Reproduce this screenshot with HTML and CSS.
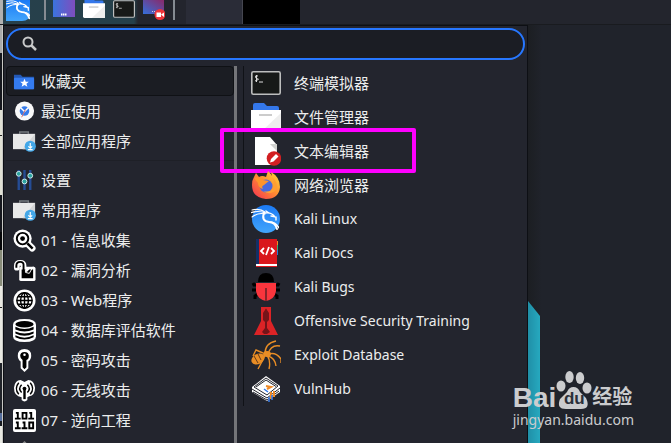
FILE: index.html
```html
<!DOCTYPE html>
<html lang="zh-CN">
<head>
<meta charset="utf-8">
<title>应用程序菜单</title>
<link rel="stylesheet" href="styles.css">
</head>
<body>
<svg class="defs" aria-hidden="true">
  <defs>
    <linearGradient id="g-kali" x1="0" y1="0" x2="0" y2="1"><stop offset="0" stop-color="#1b7af5"/><stop offset="1" stop-color="#42a5fb"/></linearGradient>
    <linearGradient id="g-screen" x1="0" y1="0" x2="1" y2="0"><stop offset="0" stop-color="#3b74dd"/><stop offset="1" stop-color="#7f4dbe"/></linearGradient>
    <linearGradient id="g-rec" x1="0" y1="1" x2="1" y2="0"><stop offset="0" stop-color="#3470dc"/><stop offset="1" stop-color="#8a2868"/></linearGradient>
    <linearGradient id="g-fox" x1="1" y1="0" x2="0" y2="1"><stop offset="0" stop-color="#ffdc3e"/><stop offset=".45" stop-color="#ff9130"/><stop offset="1" stop-color="#f52c55"/></linearGradient>
    <symbol id="dragon" viewBox="0 0 28 28"><g fill="none" stroke="#fff" stroke-linecap="round"><path d="M-1 9Q7 6 14 9M1 6Q9 4 14 8M1 13Q8 8 14 10" stroke-width="1.1"/><path d="M13 9Q10 17 18 18Q24 18 26 25" stroke-width="2"/><path d="M14 9Q21 8 24 13M15 7L18 9M20 12L25 13L25 16M18 18Q25 18 28 24" stroke-width="1.4"/></g></symbol>
    <symbol id="files" viewBox="0 0 30 28"><path d="M2 2Q2 0 4 0H13L16 3H26Q28 3 28 5V9H2Z" fill="#3477ea"/><path d="M0 7H30V25Q30 27 28 27H2Q0 27 0 25Z" fill="#fff"/><path d="M30 10V27H12Z" fill="#eee"/><path d="M8 12H21" stroke="#bbb" stroke-width="1.5"/></symbol>
    <symbol id="term" viewBox="0 0 30 24"><rect x=".8" y=".8" width="28.4" height="22.4" rx="1.5" fill="#171918" stroke="#bdbebe" stroke-width="1.6"/><path d="M7 5Q4 4 4.500 6T7 8T4 10M5.500 4V11M8 11H12" fill="none" stroke="#ddd"/></symbol>
    <symbol id="bag" viewBox="0 0 24 22"><path d="M7 3V1H16V3" fill="none" stroke="#777b80" stroke-width="1.500"/><rect x="0" y="3" width="23" height="16" fill="#e9e9e9"/><path d="M23 3V19H10Z" fill="#d3d4d5"/><circle cx="18" cy="16" r="5.800" fill="#43a7e8"/><path d="M18 12.500V18M16 16L18 18L20 16M15.500 19.500H20.500" fill="none" stroke="#fff" stroke-width="1.200"/></symbol>
  </defs>
</svg>
<div class="desktop">
  <header class="panel">
    <button class="panel-btn start" aria-label="开始菜单"><svg viewBox="0 0 24 24"><path d="M0 0H24V13Q24 21 16 21H0Z" fill="url(#g-kali)"/><use href="#dragon" width="25" height="25" y="-4"/></svg></button>
    <span class="sep"></span>
    <button class="panel-btn" aria-label="显示桌面"><svg viewBox="0 0 22 24"><rect width="22" height="17" fill="url(#g-screen)"/><path d="M8 14.500H14" stroke="#fff" stroke-width="2" stroke-dasharray="1.500 .5"/></svg></button>
    <button class="panel-btn" aria-label="文件"><svg viewBox="0 0 22 24"><use href="#files" width="22" height="21" y="-2"/></svg></button>
    <button class="panel-btn" aria-label="终端"><svg viewBox="0 0 22 24"><use href="#term" width="22" height="18"/></svg></button>
    <button class="panel-btn" aria-label="录屏"><svg viewBox="0 0 22 24"><rect width="21" height="14" y="0" fill="url(#g-rec)"/><path d="M9 11.500H13" stroke="#ccd" stroke-dasharray="1 1"/><circle cx="17" cy="14.500" r="5.500" fill="#ed3439"/><path d="M13.500 12.500H18V17H13.500ZM18 14.500L21 12.500V17Z" fill="#fff"/></svg></button>
    <span class="sep"></span>
    <span class="task"></span>
    <span class="task active"></span>
  </header>
  <div class="stage">
    <div class="edge"></div>
    <main class="menu">
      <label class="search">
        <svg viewBox="0 0 16 16"><circle cx="6" cy="6" r="4.500" fill="none" stroke="#c8c9ca" stroke-width="2"/><path d="M9.500 9.500L14 14" stroke="#c8c9ca" stroke-width="2.500"/></svg>
        <input type="text" aria-label="搜索">
      </label>
      <div class="columns">
        <nav class="categories">
          <a href="#" class="cat selected"><svg viewBox="0 0 24 24"><path d="M1 5H8L10 7H22V20H1Z" fill="#2358b5"/><rect x="1" y="8" width="21" height="12" rx="1" fill="#347bef"/><path d="M12 9L13.300 12.300H16.500L14 14.300L15 17.500L12 15.600L9 17.500L10 14.300L7.500 12.300H10.700Z" fill="#fff"/></svg>收藏夹</a>
          <a href="#" class="cat"><svg viewBox="0 0 24 24"><circle cx="12" cy="11.500" r="10" fill="#f9f9fa"/><circle cx="12" cy="11.500" r="5" fill="#367bea"/><path d="M8 8L12 12L16 8" fill="none" stroke="#fff" stroke-width="1.500"/><path d="M13 10L9 18" stroke="#df716d"/></svg>最近使用</a>
          <a href="#" class="cat"><svg viewBox="0 0 24 24"><use href="#bag" width="24" height="22" y="1"/></svg>全部应用程序</a>
          <hr class="rule">
          <a href="#" class="cat"><svg viewBox="0 0 24 24"><path d="M6 1V22M12 1V22M18 1V22" stroke="#254c94" stroke-width="2.500"/><g fill="#2ba39f" stroke="#d4eeee"><circle cx="6" cy="5" r="2.500"/><circle cx="12" cy="13" r="2.500"/><circle cx="18" cy="7" r="2.500"/></g></svg>设置</a>
          <a href="#" class="cat"><svg viewBox="0 0 24 24"><use href="#bag" width="24" height="22" y="1"/></svg>常用程序</a>
          <a href="#" class="cat"><svg viewBox="0 0 24 24"><path d="M15 15L20 20" stroke="#fff" stroke-width="7" stroke-linecap="round"/><circle cx="10" cy="10" r="9.500" fill="#fff"/><path d="M15 15L20.500 20.500" stroke="#000" stroke-width="2.500"/><circle cx="10" cy="10" r="6" fill="#fff" stroke="#000" stroke-width="2"/><circle cx="10" cy="10" r="2.500" fill="#000"/></svg>01 - 信息收集</a>
          <a href="#" class="cat"><svg viewBox="0 0 24 24"><path d="M4 9V7Q4 4 7.500 4T11 7V12" fill="none" stroke="#fff" stroke-width="6" stroke-linecap="round"/><rect x="6.500" y="8" width="17" height="15" rx="2" fill="#fff"/><path d="M3.500 9V7Q3.500 3 7.500 3T11 7V12" fill="none" stroke="#000" stroke-width="2"/><path d="M9 11H13L14 14L17 11H21V20H9Z" fill="#000"/><path d="M13 11V14L17 15L21 8" fill="none" stroke="#fff"/></svg>02 - 漏洞分析</a>
          <a href="#" class="cat"><svg viewBox="0 0 24 24"><circle cx="12" cy="12" r="11.500" fill="#fff"/><g fill="none" stroke="#000" stroke-width="1.500"><circle cx="12" cy="12" r="8"/><ellipse cx="12" cy="12" rx="4" ry="8"/><path d="M12 4V20M4 12H20M5.500 8H18.500M5.500 16H18.500"/></g></svg>03 - Web程序</a>
          <a href="#" class="cat"><svg viewBox="0 0 24 24"><path d="M0 6Q0 0 12 0T24 6V18Q24 24 12 24T0 18Z" fill="#fff"/><ellipse cx="12" cy="5.500" rx="9.500" ry="3.300"/><path d="M2.500 8Q12 13 21.500 8V11Q12 15 2.500 11ZM2.500 13Q12 17 21.500 13V15Q12 20 2.500 15ZM2.500 17Q12 22 21.500 17V19Q12 24 2.500 19Z"/></svg>04 - 数据库评估软件</a>
          <a href="#" class="cat"><svg viewBox="0 0 24 24"><path d="M5 7Q5 0 12 0T19 7Q19 11 16 13V20L12 24L8 20V13Q5 11 5 7Z" fill="#fff"/><path d="M7.500 7Q7.500 3 12 3T16.500 7T14 11.500V19L12 21L10 19V11.500Q7.500 10 7.500 7Z"/><circle cx="12" cy="6" r="1.300" fill="#fff"/></svg>05 - 密码攻击</a>
          <a href="#" class="cat"><svg viewBox="0 0 24 24"><path d="M1 9Q2 1 8 1L12 3L16 1Q22 1 23 9Q23 17 17 18L15 19V22Q12 25 9 22V19Q1 18 1 9Z" fill="#fff"/><circle cx="12" cy="10" r="2"/><path d="M12 10V21" stroke="#000" stroke-width="2.500"/><path d="M9 6Q5 10 9 14M15 6Q19 10 15 14M6 4Q1 10 6 16M18 4Q23 10 18 16" fill="none" stroke="#000" stroke-width="1.500"/></svg>06 - 无线攻击</a>
          <a href="#" class="cat"><svg viewBox="0 0 24 24"><rect width="24" height="24" rx="2" fill="#fff"/><g fill="none" stroke="#000" stroke-width="2"><path d="M3 4H5V10M2 10H8M10 4H14V10H10ZM17 4H19V10M16 10H22M3 14H5V20M2 20H8M10 14H12V20M9 20H15M17 14H21V20H17Z"/></g></svg>07 - 逆向工程</a>
          <a href="#" class="cat" aria-label="更多"><svg viewBox="0 0 24 24"><path d="M9 5L12 2L15 5Z" fill="#888"/></svg></a>
        </nav>
        <section class="apps">
          <a href="#" class="app"><svg viewBox="0 0 30 30"><use href="#term" width="30" height="24" y="3"/></svg>终端模拟器</a>
          <a href="#" class="app"><svg viewBox="0 0 30 30"><use href="#files" width="30" height="28" y="1"/></svg>文件管理器</a>
          <a href="#" class="app marked"><svg viewBox="0 0 30 30"><path d="M4 1H19L26 9V29H4Z" fill="#fff"/><path d="M19 1V8H26V15L19 8Z" fill="#d1d2d0"/><circle cx="23" cy="22.500" r="7.300" fill="#d21f22"/><path d="M19 26.500L20 23L25 18L27.500 20.500L22.500 25.500Z" fill="#fff"/></svg>文本编辑器</a>
          <a href="#" class="app"><svg viewBox="0 0 30 30"><path d="M3 7L5 3L8 7Q11 5 15 7L17 1Q20 4 21 6L20 2Q29 7 29 17Q28 29 15 29Q1 28 1 15Q1 10 3 7Z" fill="url(#g-fox)"/><circle cx="15" cy="16" r="6.500" fill="#4869df"/><path d="M3 8Q8 6 12 10L18 11L13 15Q10 16 12 19Q7 18 7 13Z" fill="#ff942b"/><path d="M21 7Q24 12 22 18Q19 23 12 21Q20 26 25 20Q28 13 21 7Z" fill="#ff9f32"/></svg>网络浏览器</a>
          <a href="#" class="app western"><svg viewBox="0 0 30 30"><circle cx="15" cy="15" r="14" fill="url(#g-kali)"/><use href="#dragon" width="28" height="28"/></svg>Kali Linux</a>
          <a href="#" class="app western"><svg viewBox="0 0 30 30"><path d="M5 1H26V29H5Z" fill="#d9171c"/><path d="M5 1H8V26H5Z" fill="#142f65"/><path d="M5 26H26V28H5Z" fill="#fff"/><path d="M26 3H27V7H26Z" fill="#ee8d28"/><path d="M26 7H27V12H26Z" fill="#2fb071"/><path d="M26 12H27V17H26Z" fill="#237ddc"/><path d="M13 10L10 13L13 16M20 10L23 13L20 16M18 9L15 17" fill="none" stroke="#fff" stroke-width="1.800"/></svg>Kali Docs</a>
          <a href="#" class="app western"><svg viewBox="0 0 30 30"><path d="M7 10Q7 1 15 1T23 10Z"/><path d="M6 13H3L2 11M24 13H27L28 11M6 18H1M24 18H29M7 22L4 24V27M23 22L26 24V27" fill="none" stroke="#000" stroke-width="3"/><path d="M5 11H25V19Q24 27 15 29Q6 27 5 19Z" fill="#fa353d"/><path d="M15 16V29" stroke="#8a252b" stroke-width="2"/></svg>Kali Bugs</a>
          <a href="#" class="app western"><svg viewBox="0 0 30 30"><path d="M10 1H20V15L27 29H3L10 15Z" fill="#dc2326"/><path d="M14 4Q15 1 16 4L18 7V14L16 16V22L19 26L16 28H13L11 26L14 22V16L12 14V7Z" fill="#751419"/></svg>Offensive Security Training</a>
          <a href="#" class="app western"><svg viewBox="0 0 30 30"><g fill="#e98d25"><ellipse cx="7" cy="19" rx="7" ry="5" transform="rotate(-28 7 19)"/><ellipse cx="16" cy="14" rx="4" ry="3"/></g><path d="M14 14Q14 3 25 1M17 14Q20 4 29 6M18 14Q25 12 30 19V23M17 16Q24 18 25 26M16 15Q20 21 18 29M14 15Q11 22 7 29M12 13L5 10L2 16" fill="none" stroke="#e98d25" stroke-width="1.400"/><path d="M3 16L7 23M7 14L10 20" stroke="#653a18"/></svg>Exploit Database</a>
          <a href="#" class="app western"><svg viewBox="0 0 30 30"><path d="M1 13L15 2L29 12V18L16 27L1 18Z" fill="#fff"/><path d="M3 13L15 4L27 12L16 21ZM5 13L15 6L25 12.500M1 15L16 24L29 14M2 18L16 26L28 17" fill="none" stroke="#23252e" stroke-width="1"/><path d="M15 12L20 13L16 15M20 18V25M23 17V23" fill="none" stroke="#ef8a28" stroke-width="2"/><path d="M13 15L17 18M18 23V28M21 21V26" stroke="#347bea" stroke-width="1.500"/></svg>VulnHub</a>
        </section>
      </div>
    </main>
    <aside class="wallpaper"><div class="beam"></div></aside>
  </div>
  <div class="watermark">
    <div class="brand"><span class="latin">Bai</span><span class="paw"><svg viewBox="0 0 36 38"><g fill="currentColor"><ellipse cx="5" cy="15" rx="4.500" ry="5.500"/><ellipse cx="13.500" cy="6" rx="4.200" ry="6"/><ellipse cx="24" cy="7" rx="4.200" ry="6"/><ellipse cx="31" cy="17" rx="4.500" ry="5.500"/><path d="M17.500 16Q22 16 24 21L30 27Q35 38 25 38H10Q0 38 4 28L11 21Q13 16 17.500 16Z"/></g></svg><span class="du">du</span></span><span class="hans">经验</span></div>
    <div class="site">jingyan.baidu.com</div>
  </div>
</div>
</body>
</html>
```

FILE: styles.css
```css
* { box-sizing: border-box; }

body {
  margin: 0;
  background: #20232b;
  color: #eceded;
  font: 15px/20px "Noto Sans", "Noto Sans CJK SC", sans-serif;
}

a { color: inherit; text-decoration: none; }
svg { display: block; flex: none; }
.defs { position: absolute; width: 0; height: 0; }

.desktop {
  position: relative;
  display: flex;
  flex-direction: column;
  height: 100vh;
  overflow: hidden;
}

.panel {
  display: flex;
  flex: none;
  height: 24px;
  padding-left: 6px;
  background: linear-gradient(90deg, #b0b0b0 3px, #27404b 3px, #25404b 134px, #23252d 138px);
}

.panel-btn {
  width: 22px;
  height: 24px;
  margin-right: 8px;
  padding: 0;
  border: 0;
  background: none;
}

.panel-btn svg { width: 100%; height: 24px; }
.start { width: 24px; margin-right: 14px; }

.sep {
  width: 2px;
  height: 20px;
  margin-right: 7px;
  background: #858b92;
}

.task {
  width: 56px;
  margin-left: 4px;
  background: #2a2c37;
}

.task.active {
  width: 58px;
  margin-left: 0;
  border-left: 1px solid #454650;
  background: #000;
}

.stage {
  display: grid;
  flex: 1;
  grid-template-columns: 3px minmax(0, 525fr) minmax(0, 143fr);
  min-height: 0;
  border-top: 1px solid #191b1f;
}

.edge {
  border-right: 1px solid #c8c8c5;
  background: linear-gradient(#aaa 28px, #15171d 28px 85px, #e1e1d5 85px 110px, #222 110px 111px, #e1e1d5 111px 170px, #15171d 170px 207px, #050608 207px 225px, #878b78 225px 261px, #e8e8e1 261px 282px, #222 282px 283px, #e8e8e1 283px 338px, #202329 338px 388px, #566f9e 388px 396px, #171a20 396px 401px, #e8e8e1 401px);
}

.menu {
  display: flex;
  flex-direction: column;
  min-height: 0;
  padding: 2px 2px 0;
  border: solid #0d0f14;
  border-width: 1px 1px 0;
  background: #23252e;
}

.search {
  display: flex;
  flex: none;
  align-items: center;
  height: 32px;
  margin-bottom: 6px;
  padding: 0 14px;
  border: 2px solid #2777ff;
  border-radius: 16px;
  background: #1b1d24;
}

.search svg { width: 16px; height: 16px; }

.search input {
  flex: 1;
  min-width: 0;
  border: 0;
  outline: 0;
  background: none;
  color: inherit;
  font: inherit;
}

.columns { display: flex; flex: 1; min-height: 0; }

.categories {
  flex: none;
  width: 231px;
  overflow: hidden;
  border-right: 3px solid #747579;
}

.cat {
  display: flex;
  align-items: center;
  gap: 5px;
  height: 30px;
  padding-left: 7px;
}

.cat svg { width: 23px; height: 23px; }

.selected {
  border: 1px solid #0f1115;
  border-radius: 4px;
  padding-left: 6px;
  background: #1b1d23;
}

.rule {
  height: 1px;
  margin: 4px 0;
  border: 0;
  background: #1e2027;
}

.apps {
  flex: 1;
  align-self: flex-start;
  margin-left: 6px;
  border-left: 1px solid #101217;
}

.app {
  position: relative;
  display: flex;
  align-items: center;
  gap: 13px;
  height: 34px;
  padding-left: 7px;
}

.western { font-size: 14px; }

.app svg { width: 30px; height: 30px; }

.marked::after {
  content: "";
  position: absolute;
  box-sizing: border-box;
  inset: -6px auto -5px -24px;
  width: 196px;
  border: 4px solid #f0f;
  border-radius: 2px;
}

.wallpaper {
  display: flex;
  flex-direction: column;
  justify-content: flex-end;
  background: linear-gradient(90deg, #1c1e22, #20232b 14px);
}

.beam {
  width: 12px;
  height: 142px;
  background: linear-gradient(90deg, #208fa7, #26a9bf);
  clip-path: polygon(0 0, 100% 15px, 100% 100%, 0 100%);
}

.watermark {
  position: absolute;
  right: 37px;
  bottom: 12px;
  color: #cbccce;
}

.brand { display: flex; align-items: flex-end; height: 38px; }

.latin {
  font: bold 28px/22px "Liberation Sans", sans-serif;
}

.paw { position: relative; width: 36px; height: 38px; }
.paw svg { width: 36px; height: 38px; }

.du {
  position: absolute;
  inset: auto 0 0;
  color: #2b303a;
  font: bold 17px/20px "Liberation Sans", sans-serif;
  text-align: center;
}

.hans {
  font: bold 20px/26px "Noto Sans CJK SC", sans-serif;
}

.site { font-size: 14px; line-height: 22px; }
```
